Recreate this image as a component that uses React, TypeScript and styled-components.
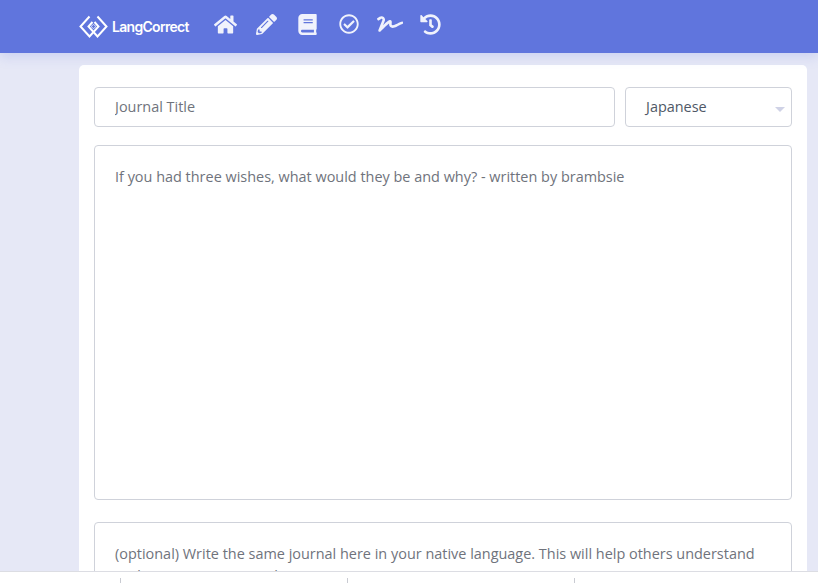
import React from "react";
import styled, { createGlobalStyle } from "styled-components";
import { FaBook, FaHistory, FaHome, FaPencilAlt, FaRegCheckCircle, FaSignature } from "react-icons/fa";

const GlobalStyle = createGlobalStyle`
  html, body {
    margin: 0;
    height: 100%;
    overflow: hidden;
    background-color: #e6e8f6;
    font-family: "Open Sans", "Liberation Sans", sans-serif;
  }
`;

const App = () => {
  return (
    <Page>
      <GlobalStyle />
      <TopBar>
        <Logo>
          <svg width="29" height="23" viewBox="0 0 29 23" fill="none" stroke="#fff" strokeWidth="2">
            <path d="M10.5 1.5 L1.5 11.5 L10.5 21.5 L19.5 11.5 L15.5 7" />
            <path d="M18.5 1.5 L27.5 11.5 L18.5 21.5 L9.5 11.5 L13.5 7" />
            <path d="M14.5 9.5 L17 11.5 L14.5 13.5 L12 11.5 Z" strokeWidth="1" opacity="0.7" />
          </svg>
          <LogoText>LangCorrect</LogoText>
        </Logo>
        <NavIcons>
          <NavIcon><FaHome size={23} /></NavIcon>
          <NavIcon><FaPencilAlt size={21} /></NavIcon>
          <NavIcon><FaBook size={21} /></NavIcon>
          <NavIcon><FaRegCheckCircle size={20} /></NavIcon>
          <NavIcon><FaSignature size={26} /></NavIcon>
          <NavIcon><FaHistory size={21} /></NavIcon>
        </NavIcons>
      </TopBar>
      <Card>
        <TitleRow>
          <TitleField placeholder="Journal Title" />
          <LanguageField>
            Japanese
            <Caret />
          </LanguageField>
        </TitleRow>
        <BodyField placeholder="If you had three wishes, what would they be and why? - written by brambsie" />
        <NativeField placeholder="(optional) Write the same journal here in your native language. This will help others understand and correct your journal." />
      </Card>
      <BottomBar>
        <Tab />
        <Tab />
        <Tab />
      </BottomBar>
    </Page>
  );
};

const Page = styled.div`
  height: 583px;
  overflow: hidden;
`;

const TopBar = styled.header`
  height: 53px;
  box-sizing: border-box;
  padding-left: 79px;
  display: flex;
  background-color: #6075dd;
  box-shadow: 0 3px 12px rgba(96, 117, 221, 0.22);
  position: relative;
`;

const Logo = styled.div`
  display: flex;
  align-items: center;
  gap: 4px;
  width: 126px;
  height: 52px;
`;

const LogoText = styled.span`
  font-family: Inter, "Liberation Sans", sans-serif;
  font-size: 14px;
  font-weight: 600;
  letter-spacing: -0.7px;
  color: #fff;
`;

const NavIcons = styled.nav`
  display: flex;
  height: 48px;
  align-items: center;
`;

const NavIcon = styled.a`
  width: 41px;
  display: flex;
  align-items: center;
  justify-content: center;
  color: #f0f2fc;
`;

const Card = styled.main`
  margin: 12px 0 0 79px;
  padding: 22px 15px 0;
  background-color: #fff;
  border-radius: 5px;
  height: 560px;
  width: 698px;
`;

const TitleRow = styled.div`
  display: flex;
  gap: 10px;
  margin-bottom: 18px;
`;

const fieldStyles = `
  display: block;
  box-sizing: border-box;
  padding: 0 20px;
  border: 1px solid #cfd2da;
  border-radius: 4px;
  background-color: #fff;
  font-family: "Open Sans", "Liberation Sans", sans-serif;
  font-size: 14.45px;
  color: #6f737c;
  outline: none;
  &::placeholder {
    color: #6f737c;
    opacity: 1;
  }
`;

const TitleField = styled.input`
  ${fieldStyles}
  width: 521px;
  height: 40px;
  padding-bottom: 2px;
`;

const LanguageField = styled.div`
  ${fieldStyles}
  position: relative;
  width: 167px;
  height: 40px;
  line-height: 37px;
  color: #4f5866;
`;

const Caret = styled.span`
  position: absolute;
  top: 19px;
  right: 6px;
  border-style: solid;
  border-width: 5px 5px 0;
  border-color: #cfd2e6 transparent transparent;
`;

const BodyField = styled.textarea`
  ${fieldStyles}
  width: 698px;
  height: 355px;
  padding: 20px;
  line-height: 21.6px;
  resize: none;
`;

const NativeField = styled.textarea`
  ${fieldStyles}
  width: 698px;
  height: 120px;
  margin-top: 22px;
  padding: 20px;
  line-height: 21.6px;
  resize: none;
`;

const BottomBar = styled.footer`
  position: fixed;
  left: 0;
  right: 0;
  bottom: 0;
  height: 12px;
  box-sizing: border-box;
  border-top: 1px solid #dcdde3;
  background-color: #fff;
  display: flex;
  padding: 6px 0 0 120px;
`;

const Tab = styled.div`
  box-sizing: border-box;
  width: 227px;
  height: 5px;
  border-left: 1px solid #c9cbd2;
`;

export default App;
